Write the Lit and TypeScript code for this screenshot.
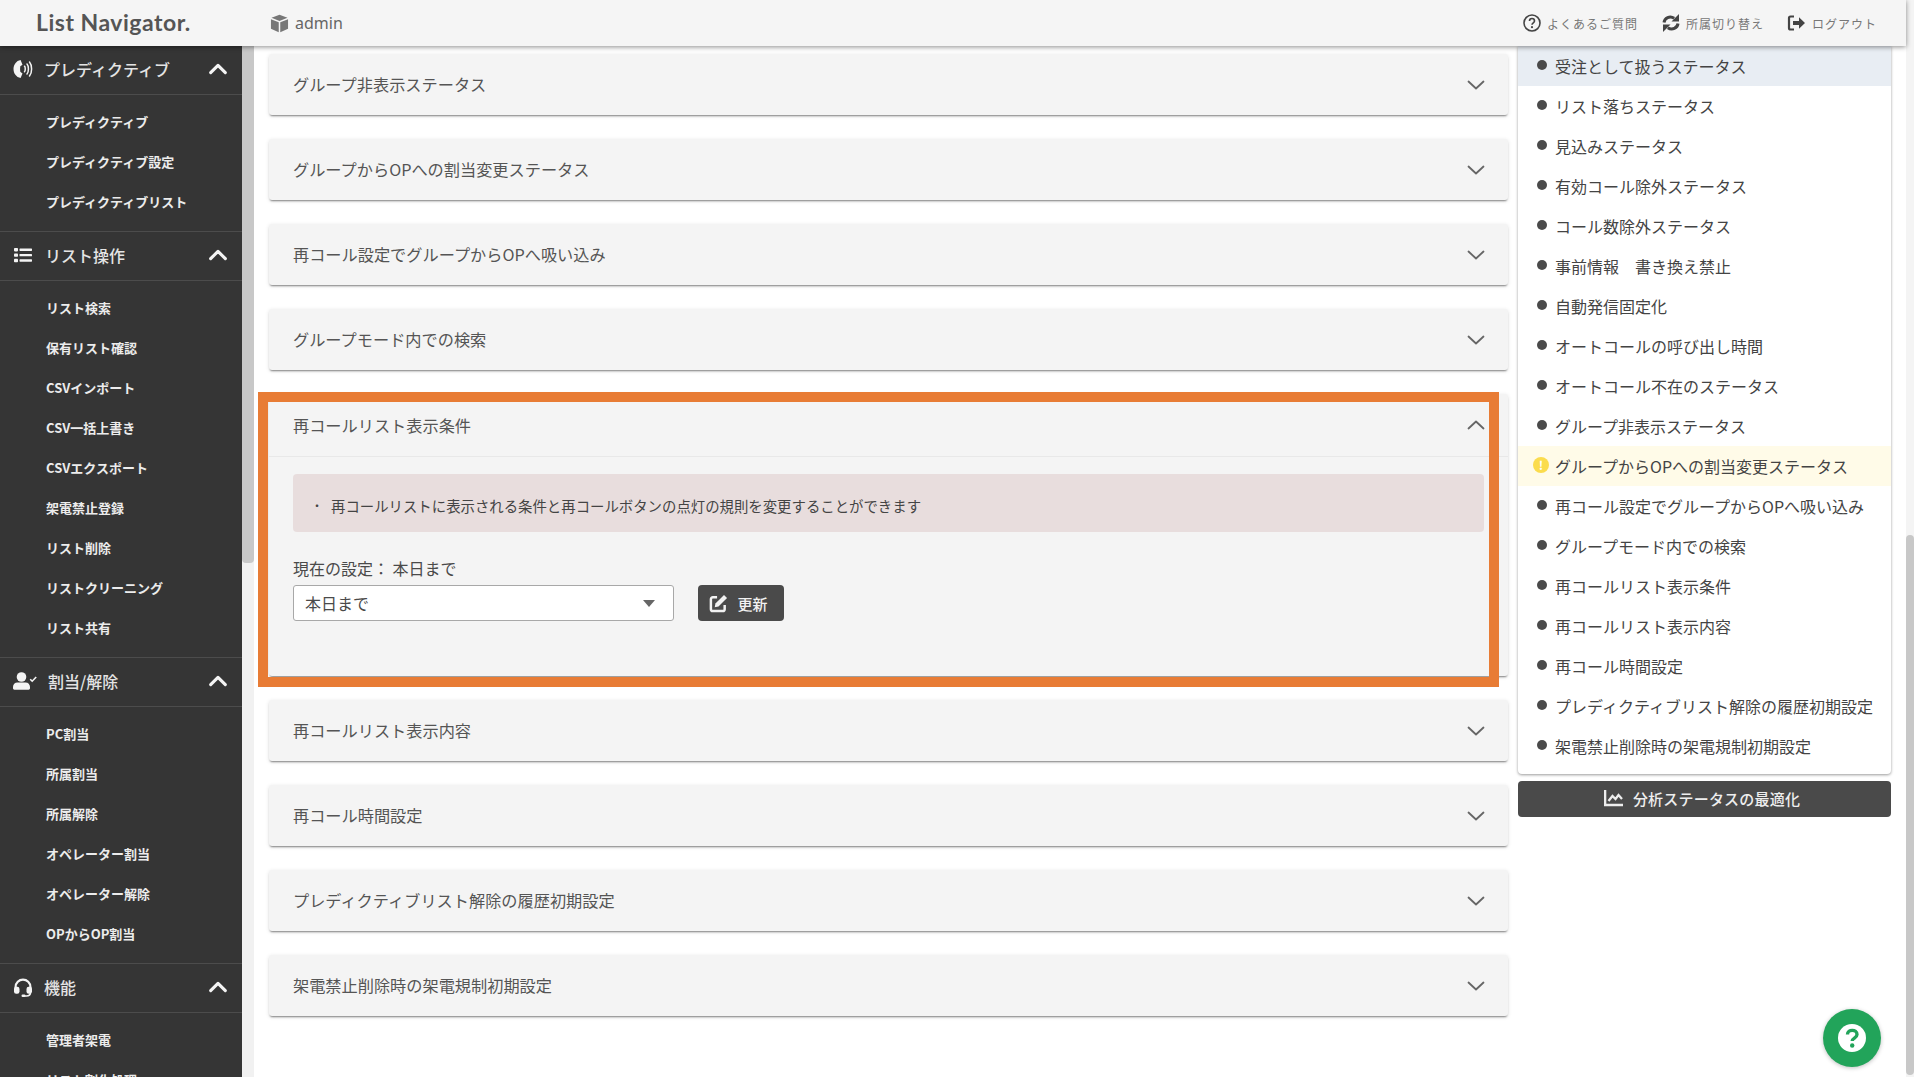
import { LitElement, html, css, svg } from "lit";
import { customElement } from "lit/decorators.js";

const chevUp = svg`<path d="M4 16l8-8 8 8" fill="none" stroke="currentColor" stroke-width="3.4" stroke-linecap="round" stroke-linejoin="round"/>`;
const chev = (up: boolean) => html`<svg class=${up ? "pchev" : "pchev down"} viewBox="0 0 18 10"><path d="${up ? "M1.5 8.5L9 1.5l7.5 7" : "M1.5 1.5L9 8.5l7.5-7"}" fill="none" stroke="currentColor" stroke-width="1.8" stroke-linecap="round" stroke-linejoin="round"/></svg>`;

const iPhone = svg`<path d="M4.600 2l3-1 1.900 4.700-2.200 1.600c-.3 1.900-.3 3.600 0 5.500l2.200 1.600L7.600 19l-3-1C1.400 15.600.5 13 .5 10.100S1.400 4.500 4.600 2z" fill="currentColor"/><path d="M11.500 7.200c1 .8 1 4.700 0 5.600M14 5c1.900 2 1.900 8 0 10M16.500 3c2.800 3.200 2.800 10.800 0 14" fill="none" stroke="currentColor" stroke-width="1.500" stroke-linecap="round"/>`;
const iList = svg`<g fill="currentColor"><rect x="1" y="3" width="4" height="3.400" rx=".8"/><rect x="1" y="8.400" width="4" height="3.400" rx=".8"/><rect x="1" y="13.800" width="4" height="3.400" rx=".8"/><rect x="6.500" y="3.500" width="12.500" height="2.400" rx=".6"/><rect x="6.500" y="8.900" width="12.500" height="2.400" rx=".6"/><rect x="6.500" y="14.300" width="12.500" height="2.400" rx=".6"/></g>`;
const iUser = svg`<g fill="currentColor"><circle cx="8.500" cy="6" r="4.800"/><path d="M4.500 11.500h8c2.700 0 4.500 2 4.500 4.600v1.200c0 .9-.6 1.400-1.400 1.400H1.400C.6 18.700 0 18.200 0 17.300v-1.200c0-2.600 1.800-4.600 4.500-4.600z"/></g><path d="M17.200 8.200l2 2 4-4.200" fill="none" stroke="currentColor" stroke-width="1.600"/>`;
const iHead = svg`<path d="M2.600 12V10a7.400 7.400 0 0 1 14.800 0v2" fill="none" stroke="currentColor" stroke-width="2.200"/><rect x="1" y="9.800" width="5.500" height="7" rx="2.200" fill="currentColor"/><rect x="13.500" y="9.800" width="5.500" height="7" rx="2.200" fill="currentColor"/><path d="M17.400 15.500c0 2.500-1.500 3.500-4 3.500h-2" fill="none" stroke="currentColor" stroke-width="1.600"/><rect x="8.500" y="17.500" width="4" height="2.500" rx="1.200" fill="currentColor"/>`;

const sections = [
  { t: "プレディクティブ", i: iPhone, w: 20, gap: 11, items: ["プレディクティブ", "プレディクティブ設定", "プレディクティブリスト"] },
  { t: "リスト操作", i: iList, w: 20, gap: 12, items: ["リスト検索", "保有リスト確認", "CSVインポート", "CSV一括上書き", "CSVエクスポート", "架電禁止登録", "リスト削除", "リストクリーニング", "リスト共有"] },
  { t: "割当/解除", i: iUser, w: 24, gap: 11, items: ["PC割当", "所属割当", "所属解除", "オペレーター割当", "オペレーター解除", "OPからOP割当"] },
  { t: "機能", i: iHead, w: 20, gap: 11, items: ["管理者架電", "リスト割化処理"] },
];

const before = ["グループ非表示ステータス", "グループからOPへの割当変更ステータス", "再コール設定でグループからOPへ吸い込み", "グループモード内での検索"];
const after = ["再コールリスト表示内容", "再コール時間設定", "プレディクティブリスト解除の履歴初期設定", "架電禁止削除時の架電規制初期設定"];
const nav = ["受注として扱うステータス", "リスト落ちステータス", "見込みステータス", "有効コール除外ステータス", "コール数除外ステータス", "事前情報　書き換え禁止", "自動発信固定化", "オートコールの呼び出し時間", "オートコール不在のステータス", "グループ非表示ステータス", "グループからOPへの割当変更ステータス", "再コール設定でグループからOPへ吸い込み", "グループモード内での検索", "再コールリスト表示条件", "再コールリスト表示内容", "再コール時間設定", "プレディクティブリスト解除の履歴初期設定", "架電禁止削除時の架電規制初期設定"];

@customElement("app-root")
export class AppRoot extends LitElement {
  static styles = css`
    :host { display: block; width: 1914px; height: 1077px; overflow: hidden; background: #fff; font-family: "Noto Sans CJK JP", "Noto Sans", sans-serif; color: #4a4a4a; }
    .app { display: grid; grid-template-columns: 242px 12px 1fr 8px; grid-template-rows: 46px 1fr; height: 1077px; }
    header { grid-column: 1 / 4; grid-row: 1; z-index: 5; background: #f5f5f5; box-shadow: 0 1px 5px rgba(0,0,0,.45); display: flex; align-items: center; }
    .logo { font-family: Lato, sans-serif; font-weight: 700; font-size: 23px; color: #555; letter-spacing: .5px; margin-left: 36px; width: 234px; padding-bottom: 3px; white-space: nowrap; }
    .org { display: flex; align-items: center; gap: 6px; font-family: "Noto Sans", sans-serif; font-size: 16px; color: #666; flex: 1; }
    .org svg { width: 19px; height: 19px; color: #777; }
    .links { display: flex; align-items: center; margin-right: 29px; font-size: 12px; letter-spacing: 1px; color: #777; }
    .link { display: flex; align-items: center; gap: 5px; margin-left: 23px; white-space: nowrap; }
    .link svg { width: 20px; height: 20px; color: #444; }
    aside { grid-column: 1; grid-row: 2; background: #353535; overflow: hidden; color: #f2f2f2; height: 1031px; }
    .sec-h { height: 48px; display: flex; align-items: center; padding-left: 13px; border-bottom: 1px solid #4c4c4c; font-size: 16px; font-weight: 500; color: #e4e4e4; position: relative; }
    .sec-h .ic { height: 20px; flex: none; color: #f4f4f4; margin-bottom: 2px; }
    .sec-t { flex: 1; padding-bottom: 3px; }
    .sec-h .cv { width: 22px; height: 22px; color: #f4f4f4; margin: 0 13px 2px 0; }
    .items { padding: 8px 0 8px 46px; border-bottom: 1px solid #4c4c4c; }
    .item { height: 40px; line-height: 38px; font-size: 13px; font-weight: 700; color: #ececec; white-space: nowrap; }
    .sb { grid-column: 2; grid-row: 2; background: #f1f1f1; }
    .sb div { height: 517px; background: #c8c8c8; border-radius: 0 0 4px 4px; }
    main { grid-column: 3; grid-row: 2; display: flex; gap: 10px; padding-left: 15px; height: 1031px; overflow: hidden; }
    .acc { width: 1239px; flex: none; padding-top: 8px; display: flex; flex-direction: column; gap: 24px; }
    .panel { background: #f4f4f4; border-radius: 3px; box-shadow: 0 2px 2px -1px rgba(0,0,0,.45), 0 1px 4px rgba(0,0,0,.12); position: relative; }
    .ph { height: 61px; box-sizing: border-box; display: flex; align-items: center; justify-content: space-between; padding: 0 23px 2px 24px; font-size: 16.200px; color: #555; }
    .pchev { width: 18px; height: 10px; color: #666; flex: none; }
    .pchev.down { margin-top: 3px; }
    .open .ph { height: 63px; border-bottom: 1px solid #e8e8e8; padding-bottom: 1px; }
    .pb { height: 219px; box-sizing: border-box; padding: 17px 24px 0 24px; }
    .alert { height: 58px; box-sizing: border-box; padding: 4px 0 0 18px; background: #e8dddd; border-radius: 4px; display: flex; align-items: center; font-size: 14.400px; color: #444; gap: 12px; }
    .alert i { font-style: normal; width: 8px; font-size: 12px; }
    .lab { font-size: 16px; color: #4a4a4a; margin-top: 23px; line-height: 27px; height: 30px; }
    .row { display: flex; gap: 24px; }
    .sel { width: 381px; height: 36px; box-sizing: border-box; background: #fff; border: 1px solid #a8a8a8; border-radius: 3px; display: flex; align-items: center; justify-content: space-between; padding: 0 18px 0 11px; font-size: 16px; color: #4a4a4a; }
    .sel b { width: 0; height: 0; border: 6px solid transparent; border-top: 7px solid #666; border-bottom: 0; }
    .btn { width: 86px; height: 36px; box-sizing: border-box; padding-right: 5px; background: #4a4a4a; border-radius: 4px; color: #f2f2f2; display: flex; align-items: center; justify-content: center; gap: 9px; font-size: 15px; font-weight: 500; }
    .btn svg { width: 19px; height: 19px; }
    .mark { position: absolute; left: -11px; top: -2px; width: 1241px; height: 295px; box-sizing: border-box; border: 10px solid #e87c35; pointer-events: none; }
    .right { width: 373px; flex: none; }
    .nav { background: #fff; border-radius: 0 0 4px 4px; box-shadow: 0 1px 3px rgba(0,0,0,.4); padding-bottom: 8px; }
    .nav div { height: 40px; display: flex; align-items: center; padding-left: 19px; font-size: 16px; color: #444; white-space: nowrap; gap: 8px; }
    .nav u { width: 10px; height: 10px; background: #4a4a4a; border-radius: 50%; flex: none; margin: 0 0 2px 0; }
    .nav .cur { background: #e8edf3; }
    .nav .warn { background: #fffbe8; padding-left: 15px; gap: 6px; }
    .nav .warn em { width: 16px; height: 16px; flex: none; margin-bottom: 2px; border-radius: 50%; background: #fbdc4d; color: #fff; font-style: normal; font-size: 12px; font-weight: 700; line-height: 16px; text-align: center; }
    .opt { margin-top: 7px; height: 36px; box-sizing: border-box; padding: 0 5px 2px 0; background: #4a4a4a; border-radius: 4px; color: #eee; display: flex; align-items: center; justify-content: center; gap: 9px; font-size: 15px; font-weight: 500; letter-spacing: .2px; }
    .opt svg { width: 20px; height: 18px; }
    .vs { grid-column: 4; grid-row: 1 / 3; background: #f4f4f4; height: 1077px; }
    .vs div { margin-top: 535px; height: 540px; background: #c8c8c8; border-radius: 4px; }
    .fab { position: absolute; left: 1823px; top: 1009px; width: 58px; height: 58px; border-radius: 50%; background: #22a45a; box-shadow: 0 1px 4px rgba(0,0,0,.25); display: flex; align-items: center; justify-content: center; }
    .fab svg { width: 30px; height: 30px; }
  `;

  render() {
    return html`<div class="app">
      <header>
        <div class="logo">List Navigator.</div>
        <div class="org">
          <svg viewBox="0 0 20 20"><path fill="currentColor" d="M10 .8l8.400 3.200L10 7.300 1.600 4zM1 5.600l8.200 3.200v10.500L1 15.600zM19 5.600v10l-8.200 3.700V8.800z"/></svg>
          admin
        </div>
        <div class="links">
          <div class="link"><svg viewBox="0 0 20 20"><circle cx="10" cy="10" r="8" fill="none" stroke="currentColor" stroke-width="1.600"/><path d="M7.500 8c0-3.300 5-3.300 5 0 0 1.800-2.500 1.900-2.500 3.800" fill="none" stroke="currentColor" stroke-width="1.600"/><circle cx="10" cy="14.200" r="1.100" fill="currentColor"/></svg>よくあるご質問</div>
          <div class="link"><svg viewBox="0 0 20 20"><path d="M3 9.500C3.500 5 8.800 2.300 13.200 5.200" fill="none" stroke="currentColor" stroke-width="3"/><path d="M18 1v7.500h-7.500z" fill="currentColor"/><path d="M17 10.500c-.5 4.500-5.800 7.200-10.200 4.300" fill="none" stroke="currentColor" stroke-width="3"/><path d="M2 19v-7.500h7.500z" fill="currentColor"/></svg>所属切り替え</div>
          <div class="link"><svg viewBox="0 0 20 20"><path d="M7 3.500H3.500a1.500 1.500 0 0 0-1.500 1.500v10a1.500 1.500 0 0 0 1.500 1.500H7" fill="none" stroke="currentColor" stroke-width="2.200"/><path d="M6 8h6V4.300l6 5.700-6 5.700V12H6z" fill="currentColor"/></svg>ログアウト</div>
        </div>
      </header>

      <aside>
        ${sections.map((s) => html`<div class="sec">
          <div class="sec-h">
            <svg class="ic" style="width:${s.w}px;margin-right:${s.gap}px" viewBox="0 0 ${s.w} 20">${s.i}</svg>
            <span class="sec-t">${s.t}</span>
            <svg class="cv" viewBox="0 0 24 24">${chevUp}</svg>
          </div>
          <div class="items">${s.items.map((x) => html`<div class="item">${x}</div>`)}</div>
        </div>`)}
      </aside>
      <div class="sb"><div></div></div>

      <main>
        <div class="acc">
          ${before.map((t) => html`<div class="panel"><div class="ph">${t}${chev(false)}</div></div>`)}
          <div class="panel open">
            <div class="ph">再コールリスト表示条件${chev(true)}</div>
            <div class="pb">
              <div class="alert"><i>・</i>再コールリストに表示される条件と再コールボタンの点灯の規則を変更することができます</div>
              <div class="lab">現在の設定： 本日まで</div>
              <div class="row">
                <div class="sel">本日まで<b></b></div>
                <div class="btn"><svg viewBox="0 0 20 20"><path d="M8.500 3.500H4A2 2 0 0 0 2 5.500V16a2 2 0 0 0 2 2h10.500a2 2 0 0 0 2-2v-4.500" fill="none" stroke="currentColor" stroke-width="2.600"/><path d="M15.800 1l3.200 3.200-9 9-4 .8.800-4z" fill="currentColor"/></svg>更新</div>
              </div>
            </div>
            <div class="mark"></div>
          </div>
          ${after.map((t) => html`<div class="panel"><div class="ph">${t}${chev(false)}</div></div>`)}
        </div>
        <div class="right">
          <div class="nav">
            ${nav.map((t, i) => i === 10
              ? html`<div class="warn"><em>!</em>${t}</div>`
              : html`<div class=${i === 0 ? "cur" : ""}><u></u>${t}</div>`)}
          </div>
          <div class="opt"><svg viewBox="0 0 20 18"><path d="M1 1v15h18" fill="none" stroke="currentColor" stroke-width="2.600"/><path d="M4.500 12l4-5 3 3 3-4 3.500 4" fill="none" stroke="currentColor" stroke-width="2.300"/></svg>分析ステータスの最適化</div>
        </div>
      </main>

      <div class="vs"><div></div></div>
      <div class="fab"><svg viewBox="0 0 30 30"><circle cx="15" cy="15" r="14" fill="#fff"/><path d="M10.500 11.500c0-5.500 9.500-5.500 9.500 0 0 3.600-4.800 3.500-4.800 6.500" fill="none" stroke="#22a45a" stroke-width="3.400"/><circle cx="15.200" cy="22.500" r="2.200" fill="#22a45a"/></svg></div>
    </div>`;
  }
}
